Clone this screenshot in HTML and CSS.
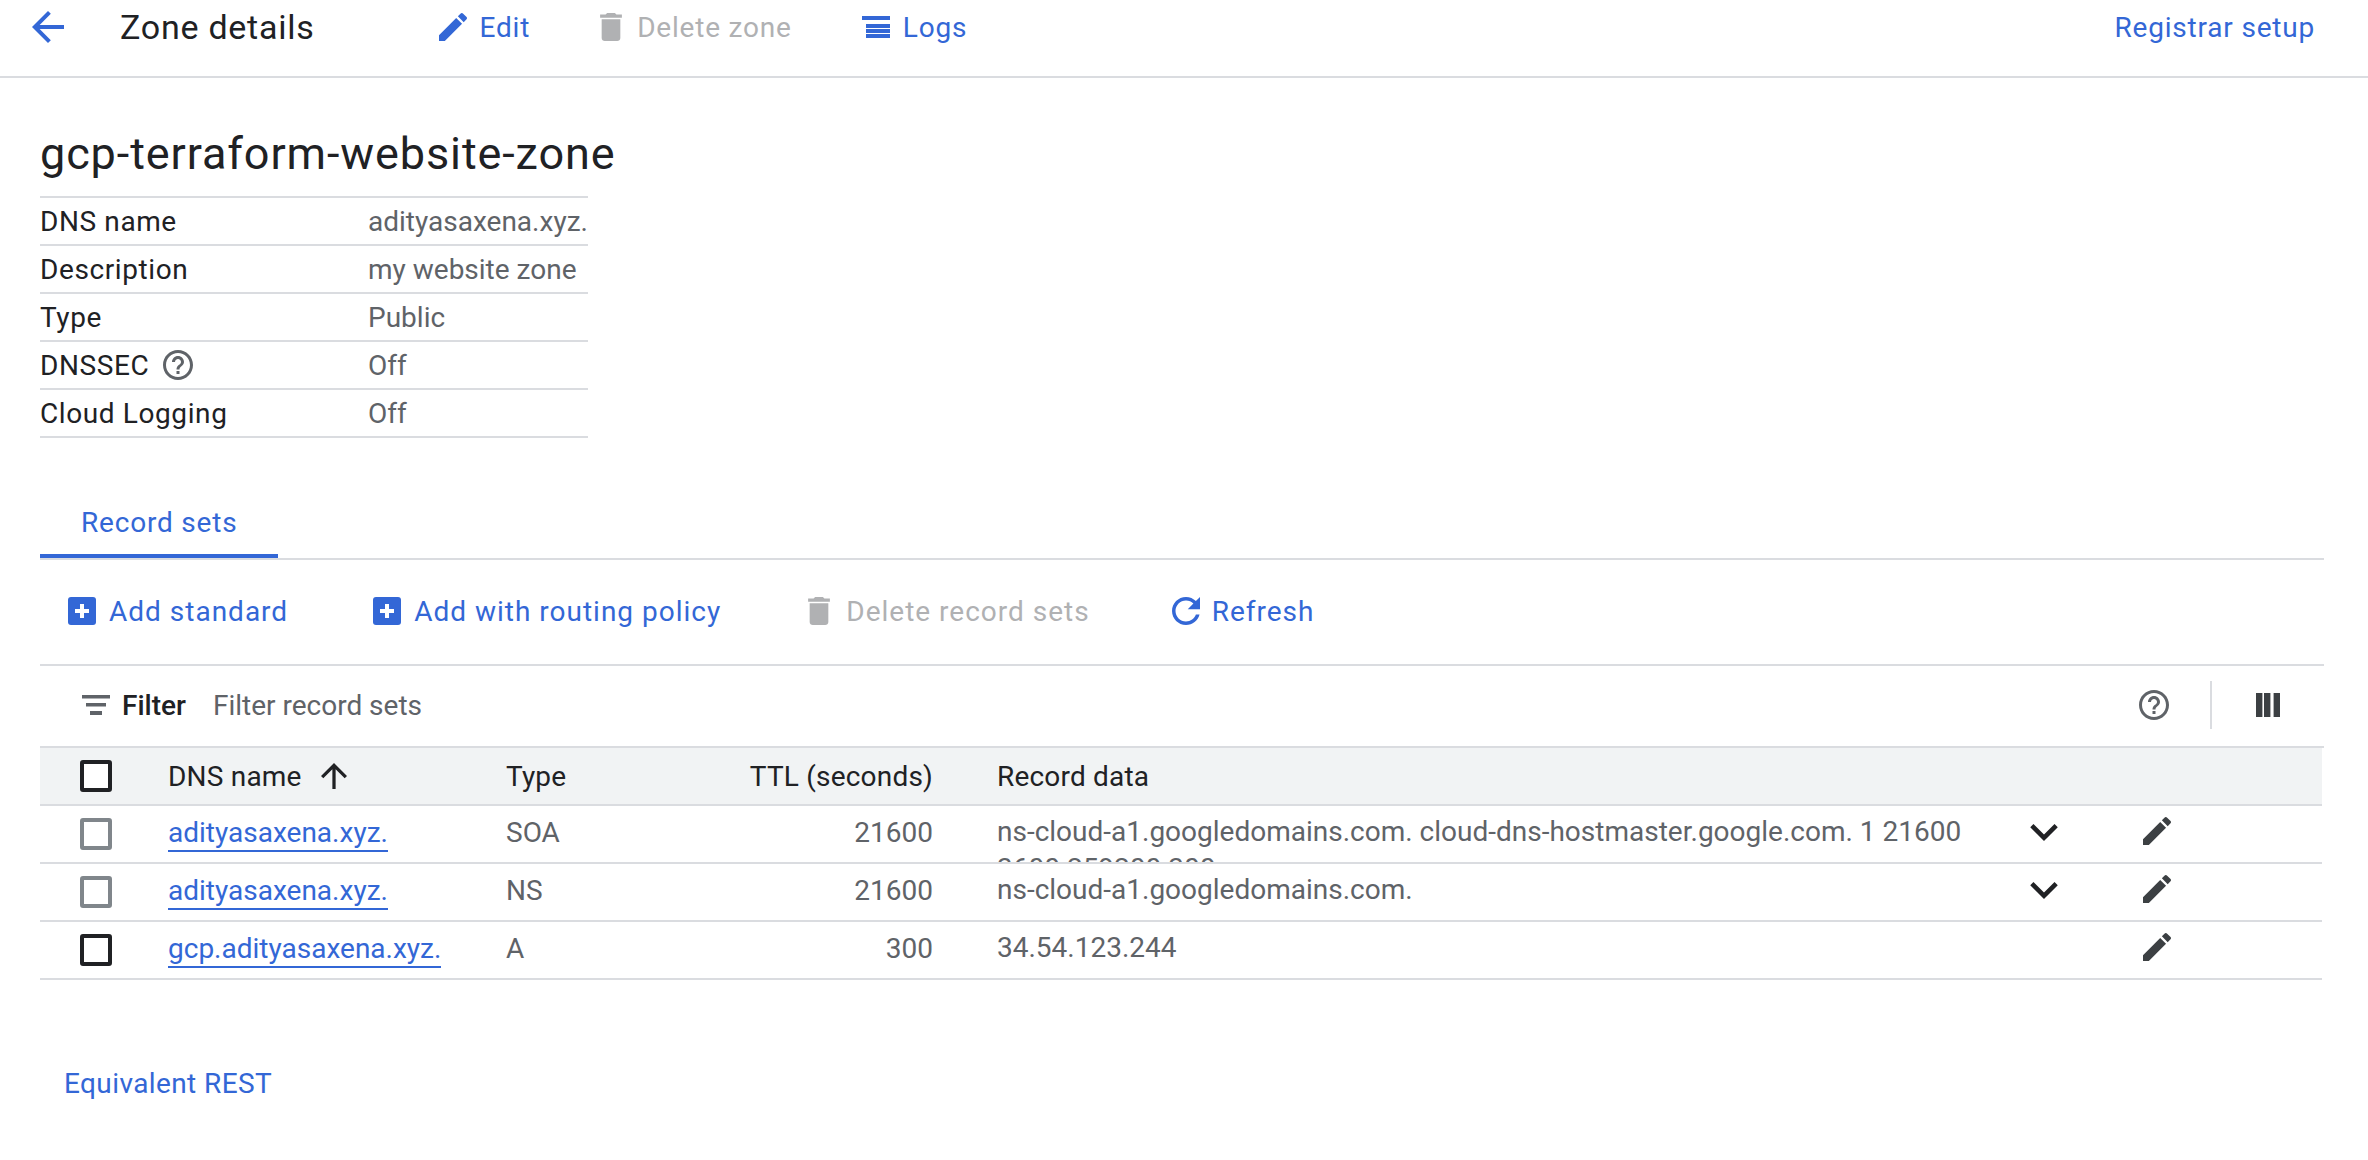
FILE: index.html
```html
<!DOCTYPE html>
<html lang="en">
<head>
    <meta charset="UTF-8">
    <meta name="viewport" content="width=device-width, initial-scale=1.0">
    <title>Zone details</title>
    <link rel="stylesheet" href="styles.css">
</head>

<body>
    <header class="topbar">
        <svg class="back-icon" viewBox="4 4 16 16"><path d="M20 11H7.83l5.59-5.59L12 4l-8 8 8 8 1.41-1.41L7.83 13H20v-2z"/></svg>
        <span class="page-title">Zone details</span>
        <a class="action action-edit">
            <svg class="icon-edit" viewBox="3 3 18 18"><path d="M3 17.25V21h3.75L17.81 9.94l-3.75-3.75L3 17.25zM20.71 7.04c.39-.39.39-1.02 0-1.41l-2.34-2.34c-.39-.39-1.02-.39-1.41 0l-1.83 1.83 3.75 3.75 1.83-1.83z"/></svg>
            Edit
        </a>
        <a class="action action-delete disabled">
            <svg class="icon-trash" viewBox="5 3 14 18"><path d="M6 19c0 1.1.9 2 2 2h8c1.1 0 2-.9 2-2V7H6v12zM19 4h-3.5l-1-1h-5l-1 1H5v2h14V4z"/></svg>
            Delete zone
        </a>
        <a class="action action-logs">
            <svg class="icon-logs" viewBox="0 0 28 22"><path d="M0 0h28v4H0zM4 8h24v4H4zM4 13h24v4H4zM4 18h24v4H4z"/></svg>
            Logs
        </a>
        <a class="action setup-link">Registrar setup</a>
    </header>

    <main class="content">
        <h1 class="zone-name">gcp-terraform-website-zone</h1>

        <div class="zone-info">
            <div class="info-row"><span class="info-label">DNS name</span><span class="info-value">adityasaxena.xyz.</span></div>
            <div class="info-row"><span class="info-label">Description</span><span class="info-value">my website zone</span></div>
            <div class="info-row"><span class="info-label">Type</span><span class="info-value">Public</span></div>
            <div class="info-row">
                <span class="info-label">DNSSEC
                    <svg class="icon-help" viewBox="2 2 20 20"><path d="M11 18h2v-2h-2v2zm1-16C6.48 2 2 6.48 2 12s4.48 10 10 10 10-4.48 10-10S17.52 2 12 2zm0 18c-4.41 0-8-3.59-8-8s3.59-8 8-8 8 3.59 8 8-3.59 8-8 8zm0-14c-2.21 0-4 1.79-4 4h2c0-1.1.9-2 2-2s2 .9 2 2c0 2-3 1.75-3 5h2c0-2.25 3-2.5 3-5 0-2.21-1.79-4-4-4z"/></svg>
                </span>
                <span class="info-value">Off</span>
            </div>
            <div class="info-row"><span class="info-label">Cloud Logging</span><span class="info-value">Off</span></div>
        </div>

        <div class="tabs">
            <a class="tab">Record sets</a>
        </div>

        <div class="toolbar">
            <a class="action tool-standard">
                <svg class="icon-add" viewBox="0 0 28 28"><rect width="28" height="28" rx="3"/><path class="plus" d="M12 7h4v5h5v4h-5v5h-4v-5H7v-4h5z"/></svg>
                Add standard
            </a>
            <a class="action tool-routing">
                <svg class="icon-add" viewBox="0 0 28 28"><rect width="28" height="28" rx="3"/><path class="plus" d="M12 7h4v5h5v4h-5v5h-4v-5H7v-4h5z"/></svg>
                Add with routing policy
            </a>
            <a class="action tool-delete disabled">
                <svg class="icon-trash" viewBox="5 3 14 18"><path d="M6 19c0 1.1.9 2 2 2h8c1.1 0 2-.9 2-2V7H6v12zM19 4h-3.5l-1-1h-5l-1 1H5v2h14V4z"/></svg>
                Delete record sets
            </a>
            <a class="action tool-refresh">
                <svg class="icon-refresh" viewBox="4 4 16 16"><path d="M17.65 6.35C16.2 4.9 14.21 4 12 4c-4.42 0-7.99 3.58-7.99 8s3.57 8 7.99 8c3.73 0 6.84-2.55 7.73-6h-2.08c-.82 2.33-3.04 4-5.65 4-3.31 0-6-2.69-6-6s2.69-6 6-6c1.66 0 3.14.69 4.22 1.78L13 11h7V4l-2.35 2.35z"/></svg>
                Refresh
            </a>
        </div>

        <div class="filter-bar">
            <svg class="icon-filter" viewBox="0 0 28 20"><path d="M0 0h28v3.4H0zM4 8h20v3.4H4zM8 16h12v4H8z"/></svg>
            <span class="filter-label">Filter</span>
            <span class="filter-placeholder">Filter record sets</span>
            <svg class="icon-help icon-help-bar" viewBox="2 2 20 20"><path d="M11 18h2v-2h-2v2zm1-16C6.48 2 2 6.48 2 12s4.48 10 10 10 10-4.48 10-10S17.52 2 12 2zm0 18c-4.41 0-8-3.59-8-8s3.59-8 8-8 8 3.59 8 8-3.59 8-8 8zm0-14c-2.21 0-4 1.79-4 4h2c0-1.1.9-2 2-2s2 .9 2 2c0 2-3 1.75-3 5h2c0-2.25 3-2.5 3-5 0-2.21-1.79-4-4-4z"/></svg>
            <span class="bar-divider"></span>
            <svg class="icon-columns" viewBox="0 0 24 24"><path d="M0 0h6.4v24H0zM8 0h6.4v24H8zM17.6 0H24v24h-6.4z"/></svg>
        </div>

        <table class="records">
            <thead>
                <tr>
                    <th class="col-check"><span class="checkbox dark"></span></th>
                    <th class="col-name">DNS name <svg class="icon-sort" viewBox="4 4 16 16"><path d="M4 12l1.41 1.41L11 7.83V20h2V7.83l5.58 5.59L20 12l-8-8-8 8z"/></svg></th>
                    <th class="col-type">Type</th>
                    <th class="col-ttl">TTL (seconds)</th>
                    <th class="col-data">Record data</th>
                    <th class="col-expand"></th>
                    <th class="col-edit"></th>
                </tr>
            </thead>
            <tbody>
                <tr>
                    <td class="col-check"><span class="checkbox"></span></td>
                    <td class="col-name"><a class="record-link">adityasaxena.xyz.</a></td>
                    <td class="col-type">SOA</td>
                    <td class="col-ttl">21600</td>
                    <td class="col-data"><div class="record-data">ns-cloud-a1.googledomains.com. cloud-dns-hostmaster.google.com. 1 21600 3600 259200 300</div></td>
                    <td class="col-expand"><svg class="icon-chevron" viewBox="6 8.59 12 7.41"><path d="M16.59 8.59L12 13.17 7.41 8.59 6 10l6 6 6-6z"/></svg></td>
                    <td class="col-edit"><svg class="icon-edit" viewBox="3 3 18 18"><path d="M3 17.25V21h3.75L17.81 9.94l-3.75-3.75L3 17.25zM20.71 7.04c.39-.39.39-1.02 0-1.41l-2.34-2.34c-.39-.39-1.02-.39-1.41 0l-1.83 1.83 3.75 3.75 1.83-1.83z"/></svg></td>
                </tr>
                <tr>
                    <td class="col-check"><span class="checkbox"></span></td>
                    <td class="col-name"><a class="record-link">adityasaxena.xyz.</a></td>
                    <td class="col-type">NS</td>
                    <td class="col-ttl">21600</td>
                    <td class="col-data"><div class="record-data">ns-cloud-a1.googledomains.com.</div></td>
                    <td class="col-expand"><svg class="icon-chevron" viewBox="6 8.59 12 7.41"><path d="M16.59 8.59L12 13.17 7.41 8.59 6 10l6 6 6-6z"/></svg></td>
                    <td class="col-edit"><svg class="icon-edit" viewBox="3 3 18 18"><path d="M3 17.25V21h3.75L17.81 9.94l-3.75-3.75L3 17.25zM20.71 7.04c.39-.39.39-1.02 0-1.41l-2.34-2.34c-.39-.39-1.02-.39-1.41 0l-1.83 1.83 3.75 3.75 1.83-1.83z"/></svg></td>
                </tr>
                <tr>
                    <td class="col-check"><span class="checkbox dark"></span></td>
                    <td class="col-name"><a class="record-link">gcp.adityasaxena.xyz.</a></td>
                    <td class="col-type">A</td>
                    <td class="col-ttl">300</td>
                    <td class="col-data"><div class="record-data">34.54.123.244</div></td>
                    <td class="col-expand"></td>
                    <td class="col-edit"><svg class="icon-edit" viewBox="3 3 18 18"><path d="M3 17.25V21h3.75L17.81 9.94l-3.75-3.75L3 17.25zM20.71 7.04c.39-.39.39-1.02 0-1.41l-2.34-2.34c-.39-.39-1.02-.39-1.41 0l-1.83 1.83 3.75 3.75 1.83-1.83z"/></svg></td>
                </tr>
            </tbody>
        </table>

        <a class="action rest-link">Equivalent REST</a>
    </main>
</body>
</html>
```

FILE: styles.css
```css
* {
    box-sizing: border-box;
}

body {
    margin: 0;
    font-family: Roboto, "Liberation Sans", sans-serif;
    font-size: 28px;
    color: #202124;
    background-color: white;
    overflow: hidden;
}

svg {
    display: block;
    flex: none;
    fill: currentColor;
}

.topbar {
    display: flex;
    align-items: center;
    height: 78px;
    padding: 0 53px 22px 32px;
    border-bottom: 2px solid #dadce0;
}

.back-icon {
    width: 32px;
    height: 32px;
    color: #3367d6;
}

.page-title {
    margin-left: 56px;
    font-size: 34px;
    letter-spacing: 0.75px;
}

.action {
    display: flex;
    align-items: center;
    gap: 13px;
    color: #3367d6;
    font-weight: 450;
    letter-spacing: 0.8px;
}

.action.disabled {
    color: #b0b1b3;
}

.action-edit {
    margin-left: 124px;
}

.action-delete {
    margin-left: 70px;
    gap: 15px;
}

.action-logs {
    margin-left: 70px;
}

.setup-link {
    margin-left: auto;
}

.icon-edit {
    width: 28px;
    height: 28px;
}

.icon-trash {
    width: 22px;
    height: 28px;
}

.icon-logs {
    width: 28px;
    height: 22px;
}

.content {
    padding: 0 44px 0 40px;
}

.zone-name {
    margin: 48px 0 14px;
    font-size: 45px;
    font-weight: 400;
    line-height: 56px;
    letter-spacing: 0.9px;
}

.zone-info {
    width: 548px;
    border-top: 2px solid #dadce0;
}

.info-row {
    display: grid;
    grid-template-columns: 328px 1fr;
    align-items: center;
    height: 48px;
    border-bottom: 2px solid #dadce0;
}

.info-label {
    display: flex;
    align-items: center;
    gap: 14px;
    font-weight: 450;
    letter-spacing: 0.6px;
}

.info-value {
    color: #5f6368;
}

.icon-help {
    width: 30px;
    height: 30px;
    color: #5f6368;
}

.tabs {
    display: flex;
    margin-top: 48px;
    border-bottom: 2px solid #dadce0;
}

.tab {
    width: 238px;
    height: 72px;
    padding: 20px 0 0 41px;
    color: #3367d6;
    font-weight: 450;
    letter-spacing: 0.8px;
    border-bottom: 4px solid #3367d6;
}

.toolbar {
    display: flex;
    align-items: center;
    height: 106px;
    padding: 0 0 2px 28px;
    border-bottom: 2px solid #dadce0;
}

.toolbar .action {
    letter-spacing: 1px;
}

.icon-add {
    width: 28px;
    height: 28px;
}

.plus {
    fill: white;
}

.icon-refresh {
    width: 28px;
    height: 28px;
}

.tool-routing {
    margin-left: 85px;
}

.tool-delete {
    margin-left: 87px;
    gap: 16px;
}

.tool-refresh {
    margin-left: 82px;
    gap: 12px;
}

.filter-bar {
    display: flex;
    align-items: center;
    height: 82px;
    padding: 0 44px 2px 42px;
    border-bottom: 2px solid #dadce0;
}

.icon-filter {
    width: 28px;
    height: 20px;
    color: #5f6368;
}

.filter-label {
    margin-left: 12px;
    font-weight: 500;
}

.filter-placeholder {
    margin-left: 27px;
    color: #5f6368;
}

.icon-help-bar {
    margin-left: auto;
}

.bar-divider {
    width: 2px;
    height: 48px;
    margin: 0 44px 0 41px;
    background-color: #dadce0;
}

.icon-columns {
    width: 24px;
    height: 24px;
    color: #3c4043;
}

.records {
    width: 2282px;
    table-layout: fixed;
    border-collapse: separate;
    border-spacing: 0;
}

.records th,
.records td {
    height: 58px;
    padding: 0;
    border-bottom: 2px solid #dadce0;
    text-align: left;
}

.records th {
    font-weight: 450;
    letter-spacing: 0.2px;
    white-space: nowrap;
    background-color: #f1f3f4;
}

.records td {
    color: #5f6368;
    vertical-align: top;
    line-height: 54px;
}

.records .col-check {
    width: 128px;
    padding-left: 40px;
}

.col-name {
    width: 338px;
}

.col-type {
    width: 200px;
}

.records .col-ttl {
    width: 227px;
    text-align: right;
}

.records .col-data {
    width: 1097px;
    padding-left: 64px;
}

.col-expand {
    width: 113px;
}

.checkbox {
    display: block;
    width: 32px;
    height: 32px;
    margin-top: 12px;
    border: 4px solid #80868b;
    border-radius: 3px;
    background-color: white;
}

th .checkbox {
    margin-top: 0;
}

.checkbox.dark {
    border-color: #202124;
}

.icon-sort {
    display: inline-block;
    width: 26px;
    height: 26px;
    margin-left: 12px;
    vertical-align: -3px;
}

.record-link {
    display: inline-block;
    height: 46px;
    line-height: 54px;
    color: #3367d6;
    border-bottom: 2px solid #3367d6;
}

.record-data {
    height: 56px;
    overflow: hidden;
    padding: 7px 40px 0 0;
    line-height: 37px;
}

.icon-chevron {
    width: 28px;
    height: 17px;
    margin-top: 18px;
    color: #202124;
}

.col-edit .icon-edit {
    margin-top: 11px;
    color: #3c4043;
}

.rest-link {
    margin: 83px 0 0 24px;
    height: 40px;
    letter-spacing: 0.4px;
}
```
